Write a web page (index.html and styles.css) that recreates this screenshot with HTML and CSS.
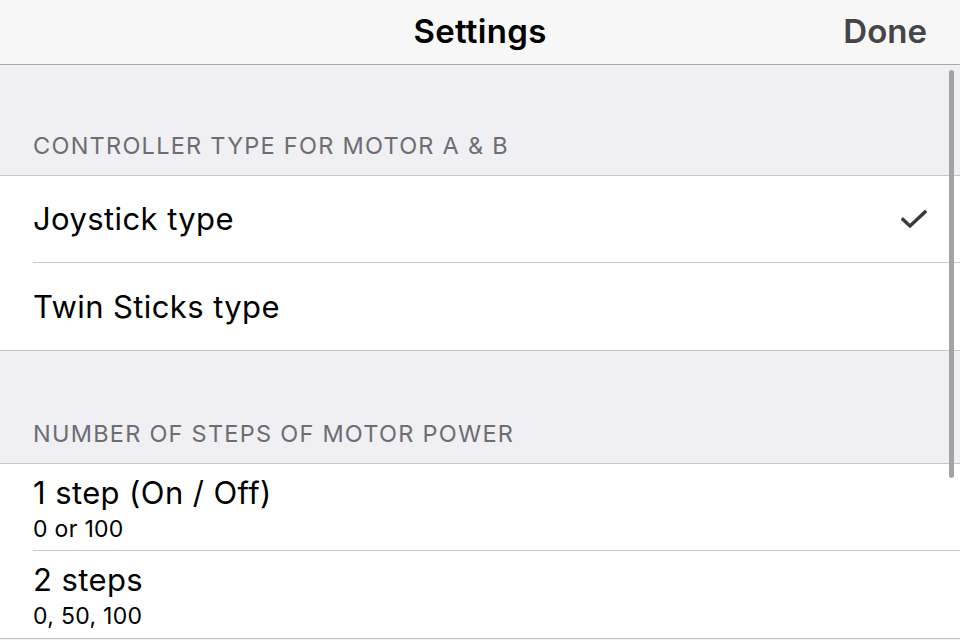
FILE: index.html
```html
<!DOCTYPE html>
<html>
<head>
<meta charset="utf-8">
<link rel="stylesheet" href="styles.css">
</head>
<body>
<div class="screen">
  <header class="navbar">
    <div class="nav-title">Settings</div>
    <div class="nav-done">Done</div>
  </header>
  <main class="content">
    <div class="section-header">CONTROLLER TYPE FOR MOTOR A &amp; B</div>
    <div class="group">
      <div class="cell">
        <div class="cell-main">
          <div class="cell-title">Joystick type</div>
        </div>
        <svg class="check" width="26" height="20" viewBox="0 0 26 20"><path d="M2 10.5 L9 17 L24 3" fill="none" stroke="#3a3a3c" stroke-width="3.4" stroke-linecap="square"/></svg>
      </div>
      <div class="cell">
        <div class="cell-main">
          <div class="cell-title">Twin Sticks type</div>
        </div>
      </div>
    </div>
    <div class="section-header second">NUMBER OF STEPS OF MOTOR POWER</div>
    <div class="group">
      <div class="cell sub">
        <div class="cell-main">
          <div class="cell-title">1 step (On / Off)</div>
          <div class="cell-subtitle">0 or 100</div>
        </div>
      </div>
      <div class="cell sub">
        <div class="cell-main">
          <div class="cell-title">2 steps</div>
          <div class="cell-subtitle">0, 50, 100</div>
        </div>
      </div>
    </div>
    <div class="scrollbar"></div>
  </main>
</div>
</body>
</html>
```

FILE: styles.css
```css
html, body {
  margin: 0;
  padding: 0;
}
body {
  width: 960px;
  height: 640px;
  overflow: hidden;
  background: #efeff4;
  font-family: "Inter", "Roboto", "Liberation Sans", sans-serif;
}
.screen {
  display: flex;
  flex-direction: column;
  height: 640px;
}
.navbar {
  height: 65px;
  flex: none;
  box-sizing: border-box;
  padding-bottom: 3px;
  background: #f7f7f8;
  border-bottom: 1px solid #a9a9ad;
  display: flex;
  align-items: center;
  justify-content: center;
  position: relative;
}
.nav-title {
  font-size: 33px;
  font-weight: 600;
  color: #000;
  letter-spacing: 0.3px;
}
.nav-done {
  position: absolute;
  right: 33px;
  top: 0;
  bottom: 3px;
  display: flex;
  align-items: center;
  font-size: 33px;
  font-weight: 600;
  color: #454547;
}
.content {
  position: relative;
  flex: 1;
  background: #efeff4;
}
.section-header {
  height: 110px;
  box-sizing: border-box;
  padding: 0 33px 15px;
  display: flex;
  align-items: flex-end;
  font-size: 23.5px;
  color: #6d6d72;
  letter-spacing: 1.25px;
  line-height: 28px;
}
.section-header.second {
  height: 112px;
}
.group {
  background: #fff;
  border-top: 1px solid #c8c7cc;
  border-bottom: 1px solid #c8c7cc;
  padding-left: 33px;
}
.cell {
  height: 87px;
  box-sizing: border-box;
  display: flex;
  align-items: center;
  padding-right: 33px;
  border-bottom: 1px solid #c8c7cc;
}
.cell:last-child {
  border-bottom: none;
}
.cell.sub {
  align-items: flex-start;
  padding-top: 11px;
}
.cell-main {
  flex: 1;
  display: flex;
  flex-direction: column;
}
.cell-title {
  font-size: 31px;
  color: #000;
  line-height: 36px;
  letter-spacing: 0.4px;
}
.cell-subtitle {
  font-size: 23px;
  color: #000;
  line-height: 36px;
  letter-spacing: 0.3px;
}
.check {
  display: block;
}
.scrollbar {
  position: absolute;
  right: 6px;
  top: 5px;
  width: 5px;
  height: 408px;
  border-radius: 3px;
  background: #a3a3a6;
}
```
